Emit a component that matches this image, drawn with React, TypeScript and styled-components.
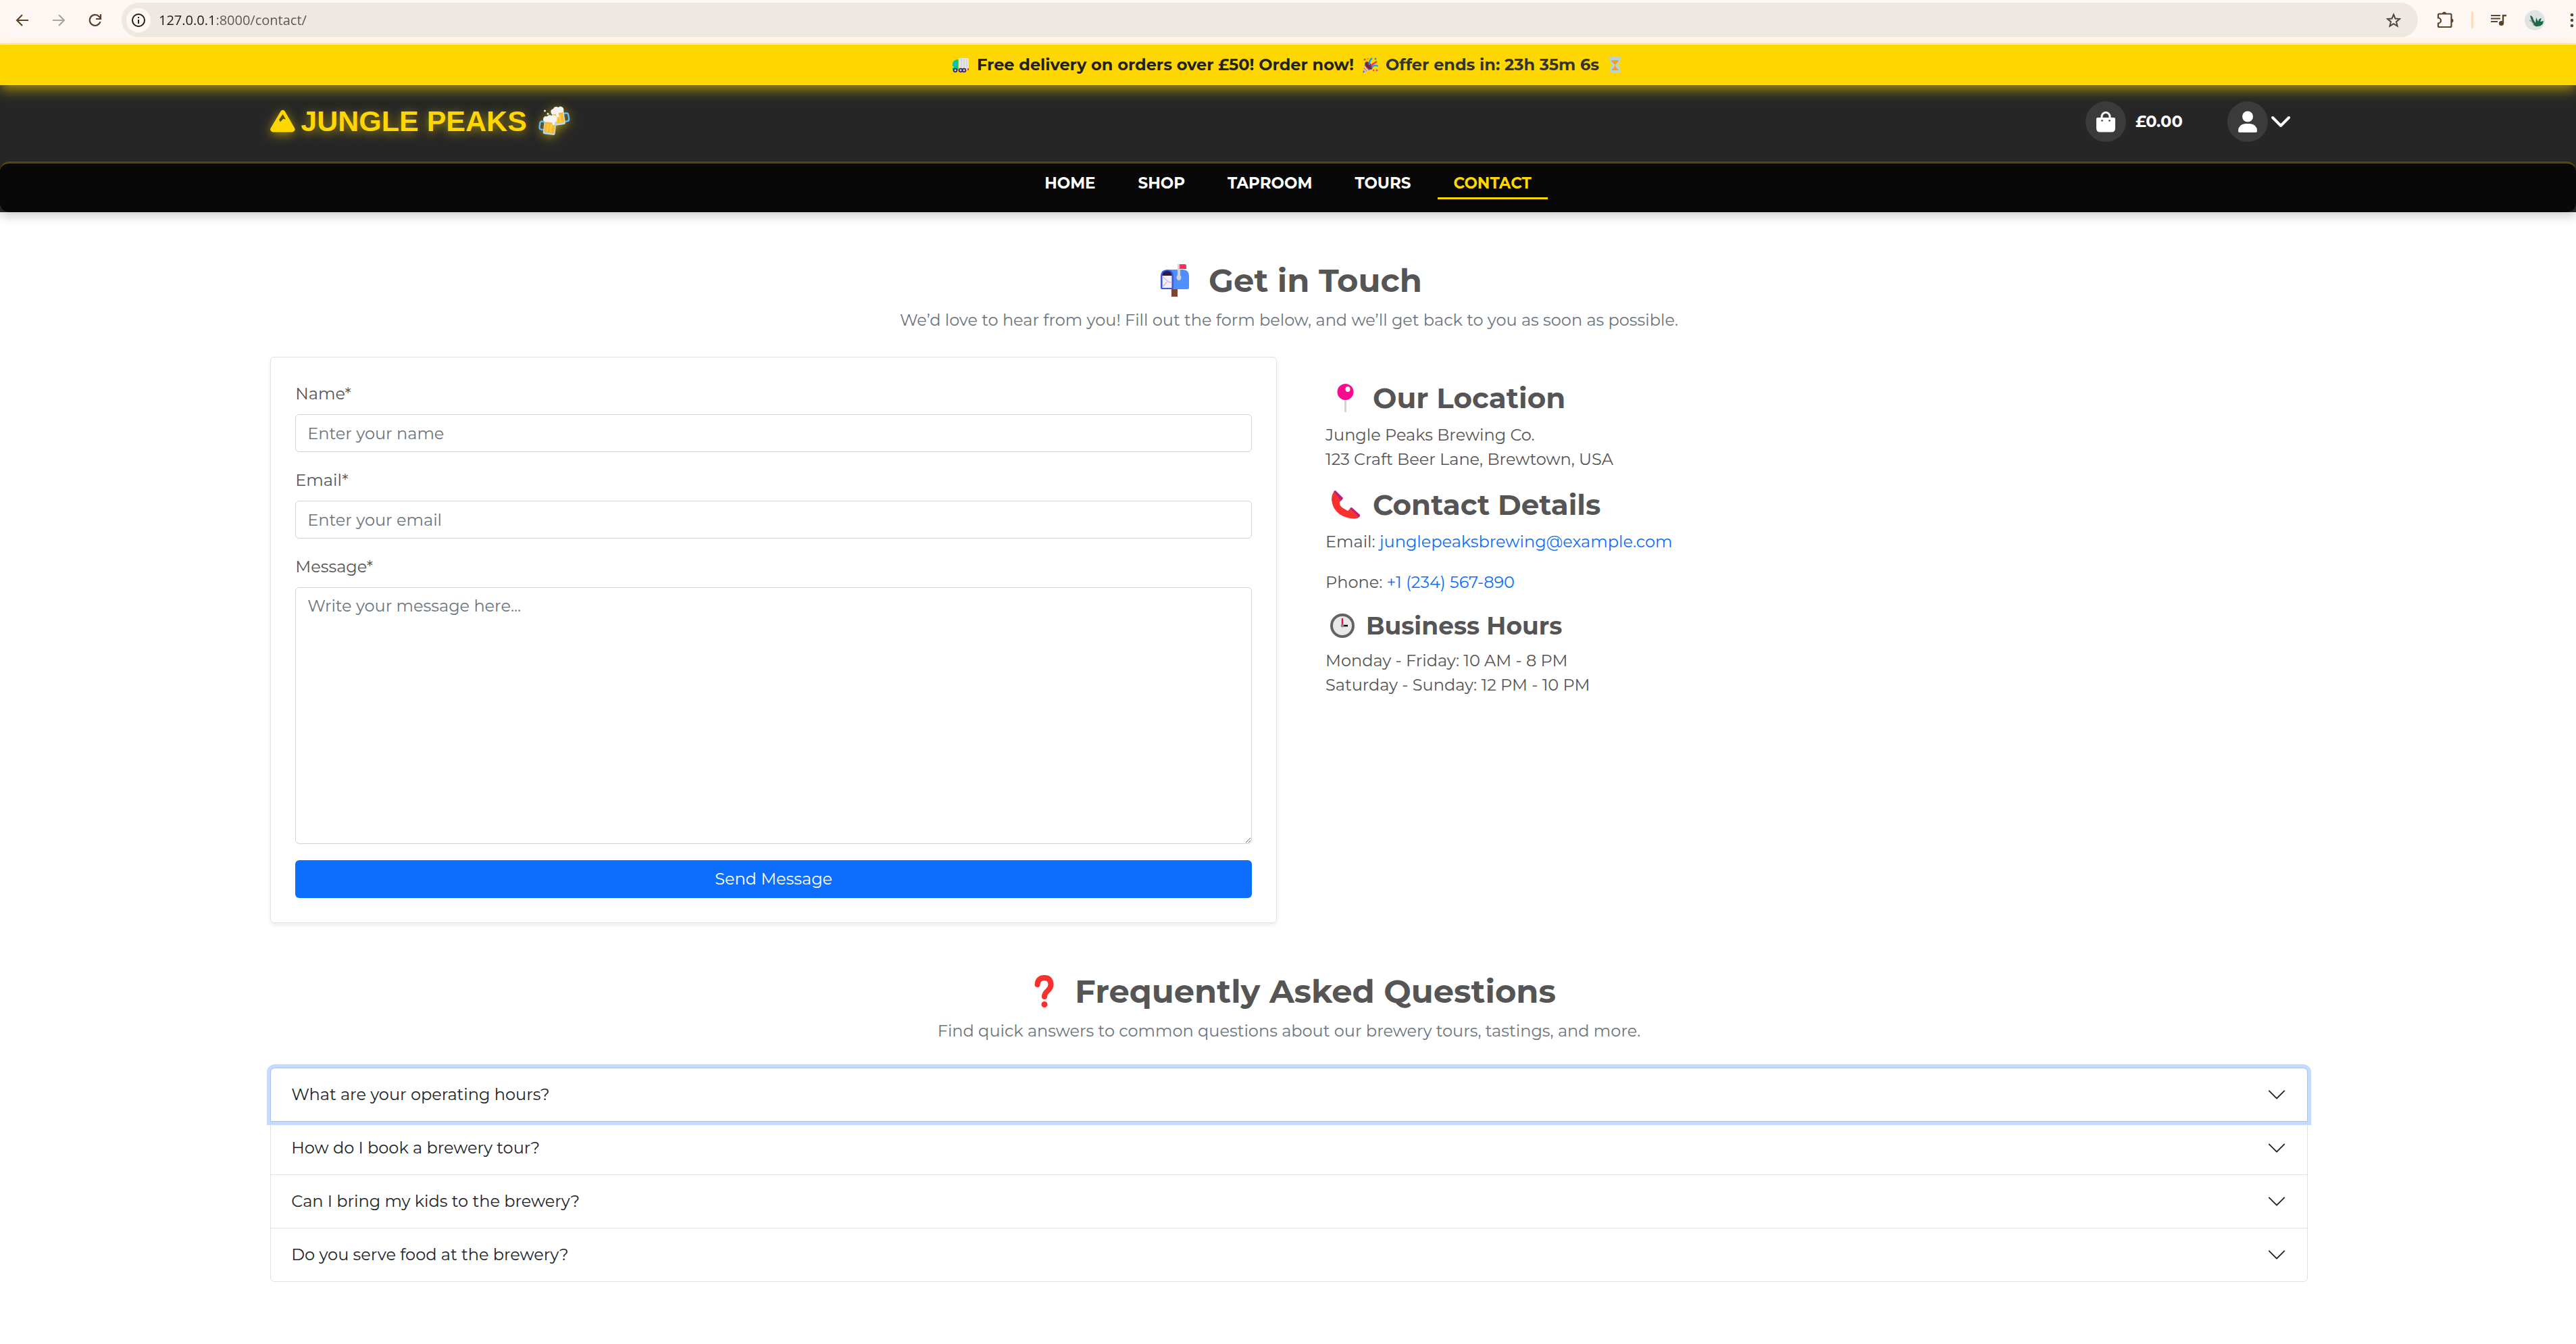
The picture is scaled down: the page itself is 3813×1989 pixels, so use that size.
import React from "react";
import styled, { createGlobalStyle, css } from "styled-components";

const gold = "#ffd700";
const bodyFont = `Montserrat, Inter, "Open Sans", "Noto Sans", sans-serif`;

const GlobalStyle = createGlobalStyle`
  *, *::before, *::after { box-sizing: border-box; }
  body {
    margin: 0;
    background: #fff;
    color: #555;
    font-family: ${bodyFont};
    font-size: 24px;
    line-height: 36px;
  }
  h1, h2, h3, p { margin: 0; }
  button, input, textarea { font: inherit; }
  a { text-decoration: none; }
  svg { display: block; flex: none; }
`;

/* ---------- browser toolbar ---------- */

const Toolbar = styled.div`
  display: flex;
  align-items: center;
  height: 66px;
  padding: 0 0 6px 14px;
  background: #fff7f4;
  border-bottom: 1px solid #fff;
  box-shadow: inset 0 -1px 0 #f5dccd;
  overflow: hidden;
`;

const ToolButton = styled.button<{ $faded?: boolean }>`
  display: grid;
  place-items: center;
  flex: none;
  width: 38px;
  height: 38px;
  margin-right: 16px;
  padding: 0;
  border: 0;
  background: none;
  color: ${(p) => (p.$faded ? "#aca5a1" : "#5a432b")};
`;

const Omnibox = styled.div`
  display: flex;
  align-items: center;
  flex: 1;
  height: 51px;
  margin-left: 4px;
  padding: 0 24px 0 7px;
  border-radius: 26px;
  background: #efe7e3;
`;

const InfoButton = styled.button`
  display: grid;
  place-items: center;
  width: 36px;
  height: 36px;
  padding: 0;
  border: 0;
  border-radius: 50%;
  background: #fff7f4;
  color: #1f1b19;
`;

const Address = styled.input`
  flex: 1;
  margin-left: 12px;
  padding: 0;
  border: 0;
  outline: 0;
  background: linear-gradient(to right, #1f1b19 82px, #5a5350 82px);
  -webkit-background-clip: text;
  background-clip: text;
  color: transparent;
  font-family: "Open Sans", "Noto Sans", sans-serif;
  font-size: 20px;
  line-height: 28px;
`;

const StarButton = styled.button`
  padding: 0;
  border: 0;
  background: none;
  color: #4d4542;
`;

const ToolbarEnd = styled.div`
  display: flex;
  align-items: center;
  gap: 26px;
  margin-left: 28px;
  color: #5a432b;
`;

const ToolbarRule = styled.span`
  width: 3px;
  height: 25px;
  border-radius: 2px;
  background: #ffdcb8;
`;

const PlainIcon = styled.button`
  padding: 0;
  border: 0;
  background: none;
  color: inherit;
`;

const KebabButton = styled(PlainIcon)`
  width: 15px;
  margin-left: 5px;
  overflow: hidden;
`;

/* ---------- site header ---------- */

const Promo = styled.div`
  position: relative;
  z-index: 1;
  display: flex;
  justify-content: center;
  align-items: center;
  gap: 7px;
  height: 60px;
  background: ${gold};
  box-shadow: 0 6px 18px rgba(255, 215, 0, 0.6);
  color: #222;
  font-weight: 700;
`;

const Countdown = styled.span`
  color: #333;
`;

const Header = styled.header`
  background: #262626;
  box-shadow: 0 6px 15px rgba(0, 0, 0, 0.2);
`;

const Container = styled.div`
  width: 80%;
  margin: 0 auto;
  padding: 0 16px 0 19px;
`;

const HeaderRow = styled(Container)`
  display: flex;
  justify-content: space-between;
  align-items: center;
  height: 113px;
  padding-bottom: 5px;
`;

const Brand = styled.a`
  display: flex;
  align-items: center;
  gap: 8px;
  padding-bottom: 3px;
  color: ${gold};
  font-family: "Liberation Sans", Arial, sans-serif;
  font-size: 43px;
  line-height: 52px;
  font-weight: 700;
  text-shadow: 0 3px 15px rgba(255, 215, 0, 0.6);

  svg {
    filter: drop-shadow(0 3px 8px rgba(255, 215, 0, 0.6));
  }
`;

const Actions = styled.div`
  display: flex;
  align-items: center;
  gap: 66px;
  padding-right: 25px;
`;

const circleRow = css`
  display: flex;
  align-items: center;
  color: #fff;
`;

const BagLink = styled.a`
  ${circleRow}
  gap: 14px;
  font-weight: 700;
`;

const AccountButton = styled.button`
  ${circleRow}
  gap: 4px;
  padding: 0;
  border: 0;
  background: none;
`;

const Circle = styled.span`
  display: grid;
  place-items: center;
  width: 60px;
  height: 60px;
  border-radius: 50%;
  background: #3b3b3b;
`;

const Nav = styled.nav`
  display: flex;
  justify-content: center;
  gap: 15px;
  height: 75px;
  padding-top: 10px;
  border-top: 3px solid #574900;
  border-radius: 14px;
  background: #080808;
`;

const NavLink = styled.a<{ $current?: boolean }>`
  height: 43px;
  padding: 0 24px;
  border-bottom: 3px solid ${(p) => (p.$current ? gold : "transparent")};
  color: ${(p) => (p.$current ? gold : "#fff")};
  font-size: 23px;
  line-height: 38px;
  font-weight: 700;
`;

/* ---------- page sections ---------- */

const Section = styled.section`
  padding-top: 72px;
`;

const Title = styled.h1`
  display: flex;
  justify-content: center;
  align-items: center;
  gap: 12px;
  font-size: 48px;
  line-height: 58px;
  font-weight: 700;
`;

const Lead = styled.p`
  margin: 12px 0 36px;
  color: #6c757d;
  text-align: center;
`;

const Columns = styled.div`
  display: grid;
  grid-template-columns: 1fr 1fr;
  gap: 36px;
`;

const Card = styled.form`
  display: flex;
  flex-direction: column;
  gap: 24px;
  padding: 36px;
  border: 1px solid #dee2e6;
  border-radius: 6px;
  box-shadow: 0 3px 6px rgba(0, 0, 0, 0.08);
`;

const Field = styled.div`
  display: flex;
  flex-direction: column;
  gap: 12px;
`;

const control = css`
  display: block;
  width: 100%;
  padding: 9px 17px;
  border: 1px solid #ced4da;
  border-radius: 6px;
  background: #fff;
  color: #212529;
  line-height: 36px;

  &::placeholder {
    color: #6c757d;
    opacity: 1;
  }
`;

const TextInput = styled.input`
  ${control}
  height: 56px;
`;

const TextArea = styled.textarea`
  ${control}
  resize: vertical;
`;

const Submit = styled.button`
  height: 56px;
  border: 0;
  border-radius: 6px;
  background: #0d6efd;
  color: #fff;
`;

const Aside = styled.div`
  display: flex;
  flex-direction: column;
  gap: 24px;
  padding: 36px;
`;

const InfoBlock = styled.div`
  display: flex;
  flex-direction: column;
  gap: 12px;
`;

const InfoTitle = styled.h2<{ $small?: boolean }>`
  display: flex;
  align-items: center;
  gap: ${(p) => (p.$small ? 10 : 12)}px;
  font-size: ${(p) => (p.$small ? 36 : 42)}px;
  line-height: ${(p) => (p.$small ? 44 : 50)}px;
  font-weight: 700;
`;

const InfoText = styled.p`
  & + & {
    margin-top: 12px;
  }
`;

const InfoLink = styled.a`
  color: #0d6efd;
`;

const Accordion = styled.div`
  border: 1px solid #dee2e6;
  border-radius: 6px;
`;

const Question = styled.button<{ $focused?: boolean }>`
  position: relative;
  display: flex;
  justify-content: space-between;
  align-items: center;
  width: 100%;
  height: 78px;
  padding: 0 30px;
  border: 0;
  background: #fff;
  color: #212529;
  text-align: left;
  border-radius: ${(p) => (p.$focused ? "6px 6px 0 0" : "0 0 6px 6px")};

  ${(p) =>
    p.$focused &&
    css`
      z-index: 1;
      box-shadow: 0 0 0 1px #aac4ea, 0 0 0 6px #c2dbfe;
    `}
`;

const QuestionItem = styled.div`
  & + & {
    border-top: 1px solid #dee2e6;
  }
`;

/* ---------- drawings ---------- */

const Emoji = ({ w, h, box, children }: { w: number; h: number; box: string; children: React.ReactNode }) => (
  <svg width={w} height={h} viewBox={box} aria-hidden="true">
    {children}
  </svg>
);

const Mountain = () => (
  <svg width="37" height="34" viewBox="0 0 37 34" aria-hidden="true">
    <path fill={gold} d="M15.6 2.4a3.6 3.6 0 0 1 6 0L36 27.4a4 4 0 0 1-3.4 6H4A4 4 0 0 1 .7 27.4Z" />
    <path fill="#5a4e10" d="m18.500 7 4.500 7.500-4-.5-4 4.500-2-3.500Z" />
  </svg>
);

const Beers = () => (
  <Emoji w={59} h={46} box="0 0 59 46">
    <g transform="rotate(-8 40 20)">
      <path d="M47 13h4q3 0 3 3v6q0 3-3 3h-4" fill="none" stroke="#66b8f5" strokeWidth="2.400" />
      <rect x="30" y="8" width="18" height="21" rx="2" fill="#b5e2fb" />
      <rect x="31.500" y="8" width="15" height="18.500" fill="#ffb92e" />
      <path d="M36 14v11M41 14v11" stroke="#ffd24b" strokeWidth="2.500" />
      <path d="M29 9a4 4 0 0 1 4-5 5 5 0 0 1 8-1 4.500 4.500 0 0 1 7 5q0 3-3 3h-5v5q-2 3-4 0v-4h-3q-4 0-4-3Z" fill="#f4f4f4" />
    </g>
    <g transform="rotate(7 25 30)">
      <path d="M18 25h-4q-3 0-3 3v6q0 3 3 3h4" fill="none" stroke="#66b8f5" strokeWidth="2.400" />
      <rect x="17" y="21" width="18" height="22" rx="2" fill="#a9daf7" />
      <rect x="18.500" y="21" width="15" height="19.500" fill="#ffb62c" />
      <path d="M23 28v11M28 28v11" stroke="#ffd24b" strokeWidth="2.500" />
      <path d="M15 22a4 4 0 0 1 5-5 5 5 0 0 1 7-2 5 5 0 0 1 8 5q0 3-2 4v3q-2 3-4 0v-2H19q-4 0-4-3Z" fill="#f4f4f4" />
    </g>
    <circle cx="18.500" cy="8" r="1.500" fill="#eee" />
    <circle cx="23" cy="12.500" r="1.500" fill="#eee" />
  </Emoji>
);

const Truck = () => (
  <Emoji w={33} h={24} box="0 0 33 24">
    <rect x="13" y="2" width="15" height="18" rx="1.500" fill="#e6e6ea" />
    <path d="M17 3v15M21 3v15M25 3v15" stroke="#c9c6d1" />
    <path d="M12.500 4v16H4v-8q0-8 8.500-8Z" fill="#00c98b" />
    <path d="M10 8v5H5q1-5 5-5Z" fill="#26aaf5" />
    <path d="M4 14h2v2H4z" fill="#f6c33c" />
    <path d="M26 17h2v3h-2z" fill="#e33" />
    {[8, 16, 21].map((x) => (
      <circle key={x} cx={x} cy="20" r="2.500" fill="#c9b5e8" stroke="#32204d" strokeWidth="1.600" />
    ))}
  </Emoji>
);

const Party = () => (
  <Emoji w={33} h={24} box="0 0 33 24">
    <path d="m10 8 10 10-14 6Z" fill="#8664e6" />
    <path d="m8 14 6 7m-7-3 4 4" stroke="#ffd84a" strokeWidth="2" />
    <ellipse cx="15" cy="13" rx="4" ry="7" transform="rotate(-42 15 13)" fill="#7b2a3b" />
    <path d="M16 12q-1-6 4-10M19 16q4-5 10-2" fill="none" stroke="#12a4f2" strokeWidth="2.400" />
    <path d="m18 13 9-6" stroke="#f5326b" strokeWidth="2.600" />
    <circle cx="9" cy="4" r="1.500" fill="#f33b4a" />
    <circle cx="14" cy="3" r="1.300" fill="#ff8d29" />
    <circle cx="25" cy="3" r="1.500" fill="#17b26a" />
    <circle cx="27" cy="20" r="1.500" fill="#e63ad5" />
    <circle cx="22" cy="20" r="1.300" fill="#f33b4a" />
  </Emoji>
);

const Hourglass = () => (
  <Emoji w={33} h={24} box="0 0 33 24">
    <path d="M9 2h15v4q0 4-5 6 5 2 5 6v4H9v-4q0-4 5-6-5-2-5-6Z" fill="#a5d8ee" />
    <path d="M11 5h11q0 3-5 6v3l5 6H11l5-6v-3q-5-3-5-6Z" fill="#ff9a1f" />
    <path d="M7.500 0h18v3h-18zM7.500 21h18v3h-18z" fill="#c9cdbb" />
  </Emoji>
);

const Mailbox = () => (
  <Emoji w={66} h={48} box="0 0 66 48">
    <rect x="23" y="34" width="9" height="14" fill="#7d4533" />
    <path d="M17 8h23q9 0 9 10v17q0 2-2 2H17Z" fill="#4f8fff" />
    <path d="M7 18q0-10 9.500-10T26 18v17q0 2-2 2H9q-2 0-2-2Z" fill="#3458e8" />
    <path d="M9.500 18q0-8 7-8t7 8v17h-14Z" fill="#321b41" />
    <path d="M9.500 17h14v18h-14z" fill="#f3eef8" />
    <path d="m9.500 18 9 8 5 1M9.500 34l7-8" fill="none" stroke="#cdc3da" strokeWidth="1.500" />
    <path d="M32 0h4v16q3 4 0 7-2 2-4 0-3-3 0-7Z" fill="#d3d3d3" />
    <path d="M35 0h8q2 0 2 2v5H35Z" fill="#fc2f5d" />
  </Emoji>
);

const Pin = () => (
  <Emoji w={58} h={42} box="0 0 58 42">
    <rect x="28" y="22" width="3" height="20" rx="1" fill="#d3d3d3" />
    <circle cx="29.500" cy="12" r="12" fill="#fa0a91" />
    <ellipse cx="33" cy="8" rx="3.500" ry="4" fill="#fff" />
  </Emoji>
);

const Phone = () => (
  <Emoji w={58} h={42} box="0 0 58 42">
    <path d="M14 0q-5 5-5 13 1 14 12 22 12 8 26 6 4-2 4-5L38 25l-5 5-7-4q-6-4-5-9l5-5Z" fill="#f8312f" />
    <path d="m12 1 3-1 11 11-3 4Z" fill="#bb1d80" />
    <path d="m36 26 3-1 12 11-1 4Z" fill="#bb1d80" />
  </Emoji>
);

const Clock = () => (
  <Emoji w={50} h={36} box="0 0 50 36">
    <circle cx="25" cy="18" r="16" fill="#e8e8e8" stroke="#636363" strokeWidth="4" />
    <path d="M25 8v9" stroke="#d1165a" strokeWidth="2.500" strokeLinecap="round" />
    <path d="M27 18h6" stroke="#000" strokeWidth="2.500" />
    <circle cx="25" cy="18" r="2.400" fill="#8a8a8a" />
  </Emoji>
);

const QuestionMark = () => (
  <Emoji w={66} h={48} box="0 0 66 48">
    <path
      d="M22.500 14q1-10 10.500-10 9 0 9.500 10 0 5-4.500 9-5 4-5 9"
      fill="none"
      stroke="#f8312f"
      strokeWidth="8"
      strokeLinecap="round"
    />
    <circle cx="33" cy="43.500" r="4.500" fill="#f8312f" />
  </Emoji>
);

const Bag = () => (
  <svg width="30" height="32" viewBox="0 0 30 32" aria-hidden="true">
    <path d="M9 14V8.500a6 6 0 0 1 12 0V14" fill="none" stroke="#fff" strokeWidth="3" />
    <path d="M3 10h24q2 0 2 2v14q0 5.500-5.500 5.500h-17Q1 31.500 1 26V12q0-2 2-2Z" fill="#fff" />
    <circle cx="9.500" cy="14.500" r="1.300" fill="#333" />
    <circle cx="20.500" cy="14.500" r="1.300" fill="#333" />
  </svg>
);

const Person = () => (
  <svg width="28" height="32" viewBox="0 0 28 32" aria-hidden="true" fill="#fff">
    <circle cx="14" cy="8.500" r="8" />
    <path d="M11 19h6q11 1 11 11 0 2-2 2H2q-2 0-2-2 0-10 11-11Z" />
  </svg>
);

const Chevron = () => (
  <svg width="30" height="20" viewBox="0 0 30 20" aria-hidden="true">
    <path d="m3 4 12 12L27 4" fill="none" stroke="#fff" strokeWidth="4" strokeLinecap="round" strokeLinejoin="round" />
  </svg>
);

const ThinChevron = () => (
  <svg width="30" height="30" viewBox="0 0 16 16" aria-hidden="true">
    <path
      fill="#212529"
      d="M1.646 4.646a.5.5 0 0 1 .708 0L8 10.293l5.646-5.647a.5.5 0 0 1 .708.708l-6 6a.5.5 0 0 1-.708 0l-6-6a.5.5 0 0 1 0-.708z"
    />
  </svg>
);

const Arrow = ({ flip }: { flip?: boolean }) => (
  <svg width="20" height="20" viewBox="0 0 20 20" aria-hidden="true">
    <path
      d={flip ? "M1 10h17M10 2l8 8-8 8" : "M19 10H2M10 2l-8 8 8 8"}
      fill="none"
      stroke="currentColor"
      strokeWidth="2.200"
    />
  </svg>
);

const Reload = () => (
  <svg width="20" height="20" viewBox="0 0 20 20" aria-hidden="true">
    <path d="M17.500 12a8 8 0 1 1-1.800-7.600L18 7" fill="none" stroke="currentColor" strokeWidth="2.200" />
    <path d="M18 1v7h-7" fill="none" stroke="currentColor" strokeWidth="2.200" />
  </svg>
);

const Info = () => (
  <svg width="20" height="20" viewBox="0 0 20 20" aria-hidden="true">
    <circle cx="10" cy="10" r="9" fill="none" stroke="currentColor" strokeWidth="2" />
    <path d="M10 9v6M10 5v2" stroke="currentColor" strokeWidth="2" />
  </svg>
);

const Star = () => (
  <svg width="24" height="24" viewBox="0 0 24 24" aria-hidden="true">
    <path
      d="m12 3.500 2.500 6 6.500.500-5 4.200 1.600 6.400L12 17.100l-5.600 3.500L8 14.200 3 10l6.500-.500Z"
      fill="none"
      stroke="currentColor"
      strokeWidth="2"
    />
  </svg>
);

const Puzzle = () => (
  <svg width="25" height="25" viewBox="0 0 25 25" aria-hidden="true">
    <path d="M2 5q0-1.500 1.500-1.500h16.500q1.500 0 1.500 1.500v16.500q0 1.500-1.500 1.500H3.500Q2 23 2 21.500v-4a4 4 0 0 0 0-8Z" fill="none" stroke="currentColor" strokeWidth="2.200" />
    <path d="M8 3.500a3 3 0 0 1 6 0ZM21.500 10.500a3 3 0 0 1 0 6Z" fill="currentColor" />
  </svg>
);

const Playlist = () => (
  <svg width="24" height="20" viewBox="0 0 24 20" aria-hidden="true">
    <path d="M0 3h14M0 7.500h14M0 12h10" stroke="currentColor" strokeWidth="2" />
    <path d="M23 3h-5v11" fill="none" stroke="currentColor" strokeWidth="2.400" />
    <circle cx="15.500" cy="14.500" r="3.600" fill="currentColor" />
  </svg>
);

const Avatar = () => (
  <svg width="30" height="30" viewBox="0 0 30 30" aria-hidden="true">
    <circle cx="15" cy="15" r="15" fill="#dfe3e3" />
    <path d="M7 15q5 1 7 8M12 18l3 3" stroke="#a5b1ad" strokeWidth="2" fill="none" />
    <path d="M8 8q4 0 5 6l3 5 1-8 3 6q1-5 5-5l-2 5 5-1q-1 8-9 8-5 1-6-5-3-2-5-11Z" fill="#1b6b49" />
  </svg>
);

const Kebab = () => (
  <svg width="18" height="24" viewBox="0 0 18 24" aria-hidden="true" fill="currentColor">
    <circle cx="9" cy="4" r="2.300" />
    <circle cx="9" cy="12" r="2.300" />
    <circle cx="9" cy="20" r="2.300" />
  </svg>
);

/* ---------- page ---------- */

const links = ["HOME", "SHOP", "TAPROOM", "TOURS", "CONTACT"];

const questions = [
  "What are your operating hours?",
  "How do I book a brewery tour?",
  "Can I bring my kids to the brewery?",
  "Do you serve food at the brewery?",
];

export default function App() {
  return (
    <>
      <GlobalStyle />
      <Toolbar>
        <ToolButton aria-label="Back"><Arrow /></ToolButton>
        <ToolButton aria-label="Forward" $faded><Arrow flip /></ToolButton>
        <ToolButton aria-label="Reload"><Reload /></ToolButton>
        <Omnibox>
          <InfoButton aria-label="Site information"><Info /></InfoButton>
          <Address aria-label="Address" defaultValue="127.0.0.1:8000/contact/" spellCheck={false} />
          <StarButton aria-label="Bookmark"><Star /></StarButton>
        </Omnibox>
        <ToolbarEnd>
          <PlainIcon aria-label="Extensions"><Puzzle /></PlainIcon>
          <ToolbarRule />
          <PlainIcon aria-label="Media"><Playlist /></PlainIcon>
          <PlainIcon aria-label="Profile"><Avatar /></PlainIcon>
          <KebabButton aria-label="Menu"><Kebab /></KebabButton>
        </ToolbarEnd>
      </Toolbar>

      <Promo>
        <Truck />
        <span>Free delivery on orders over £50! Order now!</span>
        <Party />
        <Countdown>Offer ends in: 23h 35m 6s</Countdown>
        <Hourglass />
      </Promo>

      <Header>
        <HeaderRow>
          <Brand href="#home">
            <Mountain />
            <span>JUNGLE PEAKS</span>
            <Beers />
          </Brand>
          <Actions>
            <BagLink href="#bag">
              <Circle><Bag /></Circle>
              <span>£0.00</span>
            </BagLink>
            <AccountButton aria-label="Account">
              <Circle><Person /></Circle>
              <Chevron />
            </AccountButton>
          </Actions>
        </HeaderRow>
        <Nav>
          {links.map((label) => (
            <NavLink key={label} href={`#${label.toLowerCase()}`} $current={label === "CONTACT"}>
              {label}
            </NavLink>
          ))}
        </Nav>
      </Header>

      <Container as="main">
        <Section>
          <Title><Mailbox /><span>Get in Touch</span></Title>
          <Lead>We’d love to hear from you! Fill out the form below, and we’ll get back to you as soon as possible.</Lead>
          <Columns>
            <Card>
              <Field>
                <label htmlFor="name">Name*</label>
                <TextInput id="name" placeholder="Enter your name" />
              </Field>
              <Field>
                <label htmlFor="email">Email*</label>
                <TextInput id="email" type="email" placeholder="Enter your email" />
              </Field>
              <Field>
                <label htmlFor="message">Message*</label>
                <TextArea id="message" rows={10} placeholder="Write your message here..." />
              </Field>
              <Submit type="button">Send Message</Submit>
            </Card>
            <Aside>
              <InfoBlock>
                <InfoTitle><Pin /><span>Our Location</span></InfoTitle>
                <InfoText>
                  Jungle Peaks Brewing Co.
                  <br />
                  123 Craft Beer Lane, Brewtown, USA
                </InfoText>
              </InfoBlock>
              <InfoBlock>
                <InfoTitle><Phone /><span>Contact Details</span></InfoTitle>
                <InfoText>
                  Email: <InfoLink href="mailto:junglepeaksbrewing@example.com">junglepeaksbrewing@example.com</InfoLink>
                </InfoText>
                <InfoText>
                  Phone: <InfoLink href="tel:+1234567890">+1 (234) 567-890</InfoLink>
                </InfoText>
              </InfoBlock>
              <InfoBlock>
                <InfoTitle $small><Clock /><span>Business Hours</span></InfoTitle>
                <InfoText>
                  Monday - Friday: 10 AM - 8 PM
                  <br />
                  Saturday - Sunday: 12 PM - 10 PM
                </InfoText>
              </InfoBlock>
            </Aside>
          </Columns>
        </Section>

        <Section>
          <Title as="h2"><QuestionMark /><span>Frequently Asked Questions</span></Title>
          <Lead>Find quick answers to common questions about our brewery tours, tastings, and more.</Lead>
          <Accordion>
            {questions.map((question, index) => (
              <QuestionItem key={question}>
                <Question aria-expanded={false} $focused={index === 0}>
                  {question}
                  <ThinChevron />
                </Question>
              </QuestionItem>
            ))}
          </Accordion>
        </Section>
      </Container>
    </>
  );
}
